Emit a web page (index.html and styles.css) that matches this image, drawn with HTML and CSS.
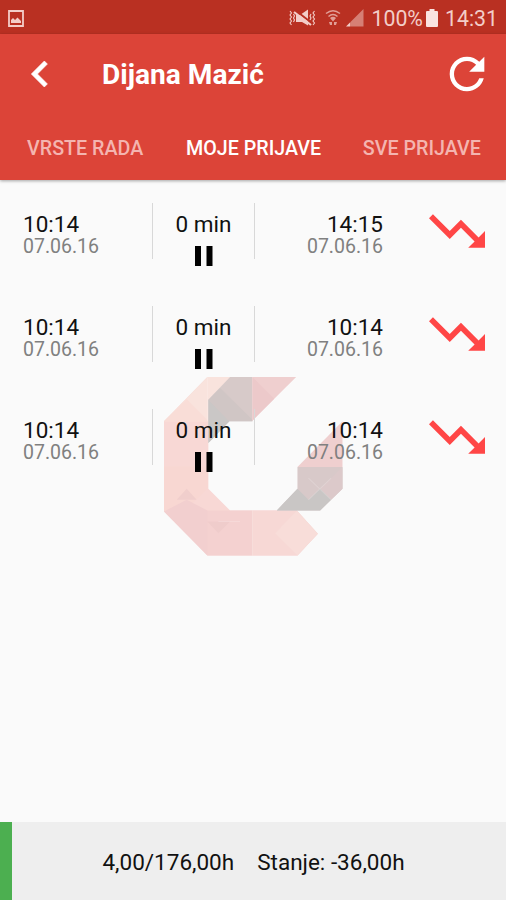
FILE: index.html
```
<!DOCTYPE html>
<html lang="hr">
<head>
    <meta charset="UTF-8">
    <meta name="viewport" content="width=device-width, initial-scale=1.0">
    <title>Moje prijave</title>
    <link rel="stylesheet" href="styles.css">
</head>
<body>

    <!-- Shared icons -->
    <svg class="sprite" aria-hidden="true">
        <symbol id="pause" viewBox="0 0 18 20">
            <path d="M0 0h6v20H0zM11.5 0h6v20h-6z"/>
        </symbol>
        <symbol id="trend-down" viewBox="2 6 20 12">
            <path d="M16 18l2.29-2.29-4.88-4.88-4 4L2 7.41 3.41 6l6 6 4-4 6.3 6.29L22 12v6z"/>
        </symbol>
    </svg>

    <!-- Status bar -->
    <div class="status-bar">
        <svg class="icon-picture" viewBox="0 0 16 17">
            <path d="M1 1h14v15H1z" fill="none" stroke="currentColor" stroke-width="1.8"/>
            <path d="M3 13V10l2-2 2 2 2.5-2.5L13 11v2z"/>
        </svg>
        <div class="status-right">
            <svg class="icon-mute" viewBox="0 0 27 18">
                <path d="M7 6h4l8-5.5v16L13 13H7z"/>
                <path d="M6 1l18 14" stroke="#b93022" stroke-width="2"/>
                <path d="M5 3l17 13" fill="none" stroke="currentColor" stroke-width="2.2"/>
                <path d="M1 2l1.5 2L1 6l1.5 2L1 10l1.5 2L1 14l1.5 2M4.5 5l1 2-1 2 1 2-1 2M25.5 2L24 4l1.5 2L24 8l1.5 2-1.5 2 1.5 2-1.5 2M22 5l-1 2 1 2-1 2" fill="none" stroke="currentColor" stroke-width="1.1"/>
            </svg>
            <svg class="icon-wifi" viewBox="0 0 16 18">
                <path d="M1 4.5Q8-1 15 4.5M3.5 7.5Q8 3.5 12.5 7.5" fill="none" stroke="currentColor" stroke-width="1.5"/>
                <path d="M5 9q3-2.5 6 0l-3 3.5zM4 13h3v3H5zM9 13h3l-1 3H9z"/>
            </svg>
            <svg class="icon-signal" viewBox="0 0 18 18">
                <path d="M17.5 0v17.5H4V13.5z" opacity=".5"/>
                <path d="M0 17.5h4v-4z"/>
            </svg>
            <span class="battery-text">100%</span>
            <svg class="icon-battery" viewBox="0 0 12 18">
                <path d="M3.5 0h5v2H11q1 0 1 1v14q0 1-1 1H1q-1 0-1-1V3q0-1 1-1h2.5z"/>
            </svg>
            <span class="clock">14:31</span>
        </div>
    </div>

    <header>
        <div class="toolbar">
            <svg class="icon-nav" viewBox="0 0 24 24">
                <path d="M15.41 7.41L14 6l-6 6 6 6 1.41-1.41L10.83 12z" stroke="currentColor" stroke-width=".3"/>
            </svg>
            <h1>Dijana Mazić</h1>
            <svg class="icon-nav" viewBox="0 0 24 24">
                <path d="M17.65 6.35C16.2 4.9 14.21 4 12 4c-4.42 0-7.99 3.58-7.99 8s3.57 8 7.99 8c3.73 0 6.84-2.55 7.73-6h-2.08c-.82 2.33-3.04 4-5.65 4-3.31 0-6-2.69-6-6s2.69-6 6-6c1.66 0 3.14.69 4.22 1.78L13 11h7V4l-2.35 2.35z"/>
            </svg>
        </div>
        <nav>
            <a class="tab">VRSTE RADA</a>
            <a class="tab active">MOJE PRIJAVE</a>
            <a class="tab">SVE PRIJAVE</a>
        </nav>
    </header>

    <main>
        <!-- Logo watermark behind the list -->
        <svg class="watermark" viewBox="42 37 535 535">
            <path d="M42 170L172 37H240L175 105V372L240 437H440L503 507L442 572H172L42 440z" fill="#f8d8d5"/>
            <path d="M42 170L172 37H240L175 105V170z" fill="#f9e3dd"/>
            <path d="M110 104L175 170H42z" fill="#f9ddd7"/>
            <path d="M42 305H172V372L105 437 42 440z" fill="#f8d7d2"/>
            <path d="M42 440L110 405 172 437 205 470 172 572z" fill="#f2cfcf"/>
            <path d="M110 372L140 405H80z" fill="#f0cecc"/>
            <path d="M172 437H307V572H172z" fill="#f4d1d0"/>
            <path d="M172 470H240L205 505z" fill="#efcccb"/>
            <path d="M307 437H440L503 507L442 572H307z" fill="#f7d8d5"/>
            <path d="M440 437L503 507L442 572L375 505z" fill="#f8ddd9"/>
            <path d="M240 37H307V170H238L175 235V105z" fill="#d7cac9"/>
            <path d="M175 105L238 170L175 235z" fill="#cac7c6"/>
            <path d="M210 70L307 165V170H238L175 105z" fill="#d0c6c5"/>
            <path d="M307 37H438L307 168z" fill="#efcfcf"/>
            <path d="M307 37L372 102L307 168z" fill="#ecc9ca"/>
            <path d="M577 170V307H442z" fill="#efcfcf"/>
            <path d="M442 307H577V372L510 437H380L442 372z" fill="#d8c9c9"/>
            <path d="M577 307V372L543 405L510 372z" fill="#dcc9ca"/>
            <path d="M442 372L380 437H510L543 405L510 372L475 405z" fill="#c9c6c5"/>
            <path d="M475 340L543 405M543 340L475 405M172 37V170M307 437V572M205 470H270" fill="none" stroke="#fff" stroke-opacity=".18" stroke-width="3"/>
        </svg>

        <ul class="entries">
            <li class="entry">
                <div class="start"><span class="time">10:14</span><span class="date">07.06.16</span></div>
                <div class="break"><span class="time">0 min</span><svg class="icon-pause"><use href="#pause"/></svg></div>
                <div class="end"><span class="time">14:15</span><span class="date">07.06.16</span></div>
                <svg class="icon-trend"><use href="#trend-down"/></svg>
            </li>
            <li class="entry">
                <div class="start"><span class="time">10:14</span><span class="date">07.06.16</span></div>
                <div class="break"><span class="time">0 min</span><svg class="icon-pause"><use href="#pause"/></svg></div>
                <div class="end"><span class="time">10:14</span><span class="date">07.06.16</span></div>
                <svg class="icon-trend"><use href="#trend-down"/></svg>
            </li>
            <li class="entry">
                <div class="start"><span class="time">10:14</span><span class="date">07.06.16</span></div>
                <div class="break"><span class="time">0 min</span><svg class="icon-pause"><use href="#pause"/></svg></div>
                <div class="end"><span class="time">10:14</span><span class="date">07.06.16</span></div>
                <svg class="icon-trend"><use href="#trend-down"/></svg>
            </li>
        </ul>
    </main>

    <footer>
        <span>4,00/176,00h</span>
        <span>Stanje: -36,00h</span>
    </footer>

</body>
</html>
```
FILE: styles.css
```
:root {
    --primary-color: #dc4438;
    --primary-dark: #b93022;
    --bg-color: #fafafa;
    --divider-color: #d8d8d8;
    --text-color: #111;
    --muted-color: #808080;
}

* {
    box-sizing: border-box;
}

body {
    margin: 0;
    height: 900px;
    display: flex;
    flex-direction: column;
    overflow: hidden;
    font-family: Roboto, sans-serif;
    background-color: var(--bg-color);
    color: var(--text-color);
}
svg {
    display: block;
    flex: none;
    fill: currentColor;
}
.sprite {
    display: none;
}

/* Status bar */
.status-bar {
    height: 34px;
    padding: 2px 8px 0;
    display: flex;
    align-items: center;
    justify-content: space-between;
    background-color: var(--primary-dark);
    color: #f3cdc8;
    font-size: 21.3px;
}
.status-right {
    display: flex;
    align-items: center;
}
.icon-picture {
    width: 16px;
    height: 17px;
}
.icon-mute {
    width: 27px;
    height: 18px;
    margin-right: 9px;
}
.icon-wifi {
    width: 16px;
    height: 18px;
    margin-right: 5px;
    opacity: 0.7;
}
.icon-signal {
    width: 18px;
    height: 18px;
    margin-right: 7px;
}
.icon-battery {
    width: 12px;
    height: 18px;
    margin: 0 7px 0 3px;
    color: #fae3e0;
}

/* Header */
header {
    height: 146px;
    position: relative;
    background-color: var(--primary-color);
    color: #fff;
    box-shadow: 0 1px 3px rgba(0, 0, 0, 0.35);
}
.toolbar {
    height: 79px;
    padding: 0 13px 0 14px;
    display: flex;
    align-items: center;
}
.icon-nav {
    width: 52px;
    height: 52px;
}
h1 {
    flex: 1;
    margin: 2px 0 0 36px;
    font-size: 28.1px;
    font-weight: 700;
}
nav {
    height: 67px;
    padding: 3px 0 0 1px;
    display: grid;
    grid-template-columns: repeat(3, 1fr);
    align-items: center;
    text-align: center;
}
.tab {
    font-size: 19.7px;
    font-weight: 500;
    color: #f4b5b0;
}
.tab.active {
    color: #fff;
}

/* Entry list */
main {
    flex: 1;
    position: relative;
}
.watermark {
    position: absolute;
    left: 164px;
    top: 197px;
    width: 178.5px;
    height: 178.5px;
}
.entries {
    position: relative;
    margin: 0;
    padding: 23px 21px 0 23px;
    list-style: none;
    display: grid;
    gap: 46.8px;
}
.entry {
    height: 56px;
    display: grid;
    grid-template-columns: 129px 103px 128px 56px;
    justify-content: start;
}
.entry > div {
    height: 56px;
    padding-top: 8px;
    display: flex;
    flex-direction: column;
}
.break {
    align-items: center;
    border: solid var(--divider-color);
    border-width: 0 1px;
}
.end {
    align-items: flex-end;
}
.time {
    font-size: 22.5px;
    line-height: 26px;
}
.date {
    font-size: 19.5px;
    line-height: 19px;
    color: var(--muted-color);
}
.icon-pause {
    width: 18px;
    height: 20px;
    margin-top: 9px;
    color: #000;
}
.icon-trend {
    width: 56px;
    height: 34px;
    margin: 11px 0 0 46px;
    color: #ff4646;
}

/* Totals */
footer {
    height: 78px;
    padding: 2px 11px 0 0;
    display: flex;
    align-items: center;
    justify-content: center;
    gap: 23px;
    border-left: 12px solid #4caf50;
    background-color: #eee;
    font-size: 22.5px;
}
```
